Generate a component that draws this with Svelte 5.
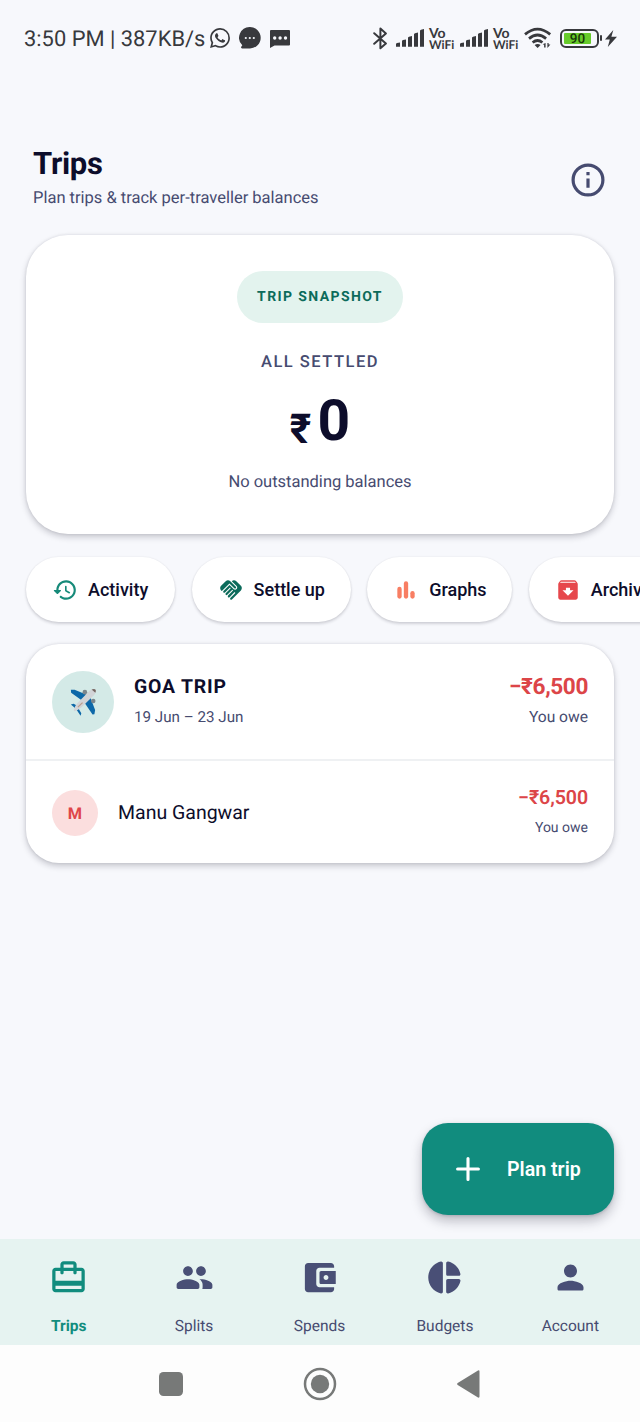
<script>
  const actions = [
    { label: 'Activity', icon: 'history', width: 149 },
    { label: 'Settle up', icon: 'handshake', width: 159 },
    { label: 'Graphs', icon: 'bars', width: 145 },
    { label: 'Archived', icon: 'archive', width: 162 }
  ];
  const tabs = [
    { label: 'Trips', icon: 'trips', active: true },
    { label: 'Splits', icon: 'people' },
    { label: 'Spends', icon: 'wallet' },
    { label: 'Budgets', icon: 'pie' },
    { label: 'Account', icon: 'person' }
  ];
</script>

{#snippet signal()}
  <svg class="signal" width="28" height="18" viewBox="0 0 28 18">
    <path d="M0 17.8v-3l1-.8 3-.6v4.400zM6 17.800v-6l1-.8 3-.6v7.400zM12 17.800V8.500l1-.8 3-.6v10.700zM18 17.800V5l1-.8 3-.6v14.200zM24 17.800V1.500l1-.8 3-.7v17.800z" />
  </svg>
{/snippet}

{#snippet carrier()}
  <span class="carrier"><span class="vo">Vo</span><span>WiFi</span></span>
{/snippet}

<div class="screen">
  <header class="status">
    <span class="clock">3:50 PM | 387KB/s</span>
    <svg class="wa" width="20" height="20" viewBox="0 0 24 24"><path d="M17.472 14.382c-.297-.149-1.758-.867-2.03-.967-.273-.099-.471-.148-.67.15-.197.297-.767.966-.94 1.164-.173.199-.347.223-.644.075-.297-.15-1.255-.463-2.39-1.475-.883-.788-1.48-1.761-1.653-2.059-.173-.297-.018-.458.13-.606.134-.133.298-.347.446-.52.149-.174.198-.298.298-.497.099-.198.05-.371-.025-.52-.075-.149-.669-1.612-.916-2.207-.242-.579-.487-.5-.669-.51-.173-.008-.371-.01-.57-.01-.198 0-.52.074-.792.372-.272.297-1.04 1.016-1.04 2.479 0 1.462 1.065 2.875 1.213 3.074.149.198 2.096 3.2 5.077 4.487.709.306 1.262.489 1.694.625.712.227 1.36.195 1.871.118.571-.085 1.758-.719 2.006-1.413.248-.694.248-1.289.173-1.413-.074-.124-.272-.198-.57-.347m-5.421 7.403h-.004a9.87 9.87 0 01-5.031-1.378l-.361-.214-3.741.982.998-3.648-.235-.374a9.86 9.86 0 01-1.51-5.26c.001-5.45 4.436-9.884 9.888-9.884 2.64 0 5.122 1.03 6.988 2.898a9.825 9.825 0 012.893 6.994c-.003 5.45-4.437 9.884-9.885 9.884m8.413-18.297A11.815 11.815 0 0012.05 0C5.495 0 .16 5.335.157 11.892c0 2.096.547 4.142 1.588 5.945L.057 24l6.305-1.654a11.882 11.882 0 005.683 1.448h.005c6.554 0 11.89-5.335 11.893-11.893a11.821 11.821 0 00-3.48-8.413z" /></svg>
    <svg class="bubble" width="22" height="22" viewBox="0 0 22 22"><path d="M11 0a10.7 10.7 0 1 1 0 21.4H3.2c-1.2 0-1.4-1-.8-1.8l.9-1.3A10.7 10.7 0 0 1 11 0z" /><g fill="#f7f8fc"><circle cx="6.8" cy="11" r="1.1" /><circle cx="10.8" cy="11" r="1.1" /><circle cx="14.8" cy="11" r="1.1" /></g></svg>
    <svg class="sms" width="20" height="18" viewBox="0 0 20 18"><path d="M1 0h18q1 0 1 1v13.4q0 1-1 1H4.5L0 18V1q0-1 1-1z" /><g fill="#f7f8fc"><circle cx="4.7" cy="8" r="1.7" /><circle cx="10.1" cy="8" r="1.7" /><circle cx="15.5" cy="8" r="1.7" /></g></svg>
    <svg class="bt" width="15" height="23" viewBox="0 0 15 23"><path d="M1.2 6.2l11.700 10.300-5.500 4.800V1.600l5.500 4.800L1.200 16.800" fill="none" stroke="#38393d" stroke-width="2" stroke-linejoin="round" stroke-linecap="round" /></svg>
    {@render signal()}
    {@render carrier()}
    {@render signal()}
    {@render carrier()}
    <svg class="wifi" width="28" height="22" viewBox="0 0 28 22"><g fill="none" stroke="#38393d" stroke-width="2.7"><path d="M1 7.4Q13.5-3.3 26.2 7.4M5 11.6q8.5-7.2 17.100 0M8.600 15.500q5-4 9.800 0" /></g><path d="M10.6 18.1q3-2.200 6 0l-3 2.900zM18.600 17.200l3-1.200v4.400h-1.500v-2.600zM26.400 17.600l-3 3.400v-5h1.200v1.600z" /></svg>
    <span class="battery"><span class="charge">90</span></span>
    <i class="nub"></i>
    <svg class="bolt" width="12" height="17" viewBox="0 0 12 17"><path d="M8.3 0L0 9.5h4.8L2.8 17 12 6.7H6.4z" /></svg>
  </header>

  <main>
    <section class="heading">
      <div>
        <h1>Trips</h1>
        <p>Plan trips &amp; track per-traveller balances</p>
      </div>
      <svg class="info" width="34" height="34" viewBox="0 0 34 34"><circle cx="17" cy="17" r="14.9" fill="none" stroke="#464b70" stroke-width="3.2" /><path d="M15.4 15.6h3.2v9.2h-3.2zM15.4 8.9h3.2v3.3h-3.2z" fill="#464b70" /></svg>
    </section>

    <section class="card summary">
      <span class="tag">TRIP SNAPSHOT</span>
      <span class="state">ALL SETTLED</span>
      <div class="total"><span class="cur">₹</span><span class="num">0</span></div>
      <span class="note">No outstanding balances</span>
    </section>

    <nav class="actions">
      {#each actions as a}
        <button class="pill" style:width="{a.width}px">
          <svg width="26" height="26" viewBox="0 0 24 24">
            {#if a.icon === 'history'}
              <path fill="#168a79" d="M13.26 3C8.17 2.86 4 6.95 4 12H2.21c-.45 0-.67.54-.35.85l2.79 2.8c.2.2.51.2.71 0l2.79-2.8c.31-.31.09-.85-.36-.85H6c0-3.9 3.18-7.05 7.1-7 3.72.05 6.85 3.18 6.9 6.9.05 3.91-3.1 7.1-7 7.1-1.61 0-3.1-.55-4.28-1.48-.4-.31-.96-.28-1.32.08-.42.42-.39 1.13.08 1.49C9 20.29 10.91 21 13 21c5.05 0 9.14-4.17 9-9.26-.13-4.69-4.05-8.61-8.74-8.74zm-.51 5c-.41 0-.75.34-.75.75v3.68c0 .35.19.68.49.86l3.12 1.85c.36.21.82.09 1.03-.26.21-.36.09-.82-.26-1.03l-2.88-1.71v-3.4c0-.4-.34-.74-.75-.74z" />
            {:else if a.icon === 'handshake'}
              <path fill="#0c6b5b" d="M16.48 10.41c-.39.39-1.04.39-1.43 0l-4.47-4.46-7.05 7.04-.66-.63c-1.17-1.17-1.17-3.07 0-4.24l4.24-4.24c1.17-1.17 3.07-1.17 4.24 0L16.48 9c.39.39.39 1.02 0 1.41zm.7-2.12c.78.78.78 2.05 0 2.83-1.27 1.27-2.61.22-2.83 0l-3.76-3.76-5.57 5.57c-.39.39-.39 1.02 0 1.41.39.39 1.02.39 1.42 0l4.62-4.62.71.71-4.62 4.62c-.39.39-.39 1.02 0 1.41.39.39 1.02.39 1.42 0l4.62-4.62.71.71-4.62 4.62c-.39.39-.39 1.02 0 1.41.39.39 1.02.39 1.41 0l4.62-4.62.71.71-4.62 4.62c-.39.39-.39 1.02 0 1.41.39.39 1.02.39 1.41 0l8.32-8.34c1.17-1.17 1.17-3.07 0-4.24l-4.24-4.24c-1.15-1.15-3.01-1.17-4.18-.06l3.74 3.77z" />
            {:else if a.icon === 'bars'}
              <g fill="#f87e63"><rect x="4" y="9" width="4" height="11" rx="2" /><rect x="10" y="4" width="4" height="16" rx="2" /><rect x="16" y="13" width="4" height="7" rx="2" /></g>
            {:else}
              <path fill="#e6474c" fill-rule="evenodd" d="M20.54 5.23l-1.39-1.68C18.88 3.21 18.47 3 18 3H6c-.47 0-.88.21-1.16.55L3.46 5.23C3.17 5.57 3 6.02 3 6.5V19c0 1.1.9 2 2 2h14c1.1 0 2-.9 2-2V6.5c0-.48-.17-.93-.46-1.27zM12 17.2l-5.1-4.9h3.2V10h3.8v2.3h3.2zM4.6 5.400l.8-1h13l.9 1z" />
            {/if}
          </svg>
          <span>{a.label}</span>
        </button>
      {/each}
    </nav>

    <section class="card trips">
      <div class="row trip">
        <span class="avatar plane">
          <svg width="28" height="28" viewBox="0 0 30 30">
            <path fill="#0d68a8" d="M2 2l4-.2 13 5.500-5.500 5.700L2.300 5zM23 10.500l5 13.200-.8 4.300-2 .3-8-11.800zM2 17.800l3-.8 5.200 2.800-2.500 2.700zM10.200 22l3 5-.8 2.800-4.700-7z" />
            <circle cx="17" cy="4.500" r="2.500" fill="#7b858b" /><circle cx="26" cy="14" r="2.400" fill="#7b858b" />
            <path fill="#d2d4d7" d="M22.3 2.7q4-2.300 5.800-1.400 1.500 1.900-.9 6L13.400 20.600q-4 3.400-7.400 4.200-1-.2-.8-1.200 1-4.600 3.700-7.200z" />
            <path fill="#73645f" d="M24.2 1.700q2.800-1.200 4-.2 1.200 1 .1 3.500z" /><path d="M9.500 20.500l5-4.800" stroke="#bc9c8c" stroke-width="1.400" />
          </svg>
        </span>
        <div class="who"><strong>GOA TRIP</strong><span>19 Jun – 23 Jun</span></div>
        <div class="owed"><strong>−₹6,500</strong><span>You owe</span></div>
      </div>
      <div class="row person">
        <span class="avatar initial">M</span>
        <span class="name">Manu Gangwar</span>
        <div class="owed small"><strong>−₹6,500</strong><span>You owe</span></div>
      </div>
    </section>

    <button class="fab">
      <svg width="24" height="24" viewBox="0 0 24 24"><path d="M12 1.6v20.800M1.600 12h20.800" stroke="#fff" stroke-width="3.100" stroke-linecap="round" /></svg>
      <span>Plan trip</span>
    </button>
  </main>

  <nav class="tabs">
    {#each tabs as t}
      <div class="tab" class:active={t.active}>
        <svg width="39" height="39" viewBox="0 0 24 24">
          {#if t.icon === 'trips'}
            <path fill-rule="evenodd" d="M17 6V4c0-1.100-.9-2-2-2H9c-1.100 0-2 .9-2 2v2H4c-1.100 0-2 .9-2 2v11c0 1.100.9 2 2 2h16c1.100 0 2-.9 2-2V8c0-1.100-.9-2-2-2zM9 4h6v2H9zm11 15H4v-2h16zm0-5H4V8h3v1c0 .55.45 1 1 1s1-.45 1-1V8h6v1c0 .55.45 1 1 1s1-.45 1-1V8h3z" />
          {:else if t.icon === 'people'}
            <path d="M16 11c1.660 0 2.990-1.340 2.990-3S17.660 5 16 5s-3 1.340-3 3 1.340 3 3 3zm-8 0c1.660 0 2.990-1.340 2.990-3S9.660 5 8 5 5 6.340 5 8s1.340 3 3 3zm0 2c-2.330 0-7 1.170-7 3.500V18c0 .55.45 1 1 1h12c.55 0 1-.45 1-1v-1.500c0-2.330-4.670-3.500-7-3.500zm8 0c-.29 0-.62.02-.97.05.02.01.03.03.04.04 1.140.83 1.930 1.940 1.930 3.410V18c0 .35-.07.69-.18 1H22c.55 0 1-.45 1-1v-1.500c0-2.330-4.670-3.500-7-3.500z" />
          {:else if t.icon === 'wallet'}
            <path d="M10 16V8c0-1.100.89-2 2-2h9V5c0-1.100-.9-2-2-2H5c-1.110 0-2 .9-2 2v14c0 1.100.89 2 2 2h14c1.100 0 2-.9 2-2v-1h-9c-1.110 0-2-.9-2-2zm3-8c-.55 0-1 .45-1 1v6c0 .55.45 1 1 1h9V8zm3 5.500c-.83 0-1.500-.67-1.500-1.500s.67-1.500 1.500-1.500 1.500.67 1.500 1.500-.67 1.500-1.500 1.500z" />
          {:else if t.icon === 'pie'}
            <path d="M11 3.180v17.640c0 .64-.59 1.120-1.210.98C5.320 20.800 2 16.790 2 12s3.320-8.800 7.790-9.800c.62-.14 1.210.34 1.210.98zm2.030 0v6.810c0 .55.45 1 1 1h6.790c.64 0 1.120-.59.98-1.220-.85-3.760-3.800-6.720-7.550-7.570-.63-.14-1.220.34-1.220.98zm0 10.830v6.810c0 .64.59 1.120 1.220.98 3.760-.85 6.710-3.820 7.560-7.580.14-.62-.35-1.220-.98-1.220h-6.790c-.56.01-1.010.46-1.010 1.010z" />
          {:else}
            <path d="M12 12c2.210 0 4-1.790 4-4s-1.790-4-4-4-4 1.790-4 4 1.790 4 4 4zm0 2c-2.670 0-8 1.340-8 4v1c0 .55.45 1 1 1h14c.55 0 1-.45 1-1v-1c0-2.660-5.330-4-8-4z" />
          {/if}
        </svg>
        <span>{t.label}</span>
      </div>
    {/each}
  </nav>

  <footer class="system">
    <svg width="24" height="24" viewBox="0 0 24 24"><rect width="24" height="24" rx="4.500" /></svg>
    <svg width="34" height="34" viewBox="0 0 34 34"><circle cx="17" cy="17" r="15" fill="none" stroke="#777978" stroke-width="2.500" /><circle cx="17" cy="17" r="9.200" /></svg>
    <svg width="23" height="28" viewBox="0 0 23 28"><path d="M.7 13L21 .5q1.500-.6 1.500 1v25q0 1.600-1.500 1L.7 15q-1.200-1 0-2z" /></svg>
  </footer>
</div>

<style>
  :global(body) { margin: 0; background: #f7f8fc; }
  .screen { width: 640px; height: 1422px; overflow: hidden; display: flex; flex-direction: column; background: #f7f8fc; color: #0d0d2b; font-family: Roboto, sans-serif; white-space: nowrap; text-rendering: geometricPrecision; }
  svg { display: block; flex: none; }
  h1, p { margin: 0; }
  button { border: 0; margin: 0; font: inherit; color: inherit; text-align: left; }

  .status { height: 76px; flex: none; box-sizing: border-box; padding-left: 24px; display: flex; align-items: center; fill: #38393d; color: #38393d; }
  .clock { width: 186px; flex: none; font-size: 21.900px; line-height: 26px; padding-top: 4px; }
  .bubble { margin-left: 9px; }
  .sms { margin: 2px 83px 0 9px; }
  .bt { margin-right: 8px; }
  .signal { margin-right: 5px; }
  .carrier { width: 31px; font: 700 12px/12px Lato, sans-serif; padding-top: 1px; }
  .carrier span { display: block; }
  .carrier .vo { font-size: 14px; }
  .wifi { margin-right: 8px; }
  .battery { width: 39px; height: 19px; box-sizing: border-box; border: 2px solid #38393d; border-radius: 6px; padding: 2px; }
  .charge { display: block; height: 11px; width: 27px; background: #67cb2b; border-radius: 1px; color: #173808; font-size: 13.500px; font-weight: 500; line-height: 12px; text-align: center; }
  .nub { width: 2px; height: 6px; margin-left: 1px; background: #38393d; border-radius: 1px; }
  .bolt { margin-left: 3px; }

  main { flex: none; height: 1163px; padding: 0 26px; box-sizing: border-box; display: flex; flex-direction: column; }
  .heading { height: 159px; box-sizing: border-box; padding: 70px 9px 0 7px; display: flex; justify-content: space-between; }
  h1 { font-size: 31px; font-weight: 700; line-height: 36px; letter-spacing: -.3px; }
  .heading p { font-size: 16.500px; line-height: 20px; margin-top: 7px; color: #464b70; }
  .info { margin-top: 17px; }

  .card { background: #fff; box-shadow: 0 3px 6px rgba(20, 20, 40, .21), 0 0 3px rgba(20, 20, 40, .1); flex: none; }
  .summary { height: 299px; border-radius: 42px; box-sizing: border-box; padding-top: 36px; display: flex; flex-direction: column; align-items: center; }
  .tag { width: 166px; height: 52px; border-radius: 26px; background: #e3f3ee; color: #0c6b5b; font-size: 14px; font-weight: 700; letter-spacing: 1.400px; line-height: 52px; text-align: center; }
  .state { margin-top: 29px; font-size: 16.500px; line-height: 22px; font-weight: 500; letter-spacing: 1.500px; color: #464b70; }
  .total { display: flex; align-items: baseline; gap: 6px; height: 70px; margin-top: 12px; font-weight: 700; line-height: 70px; }
  .cur { font-size: 41px; position: relative; top: 3px; }
  .num { font-size: 57px; }
  .note { margin-top: 16px; font-size: 16.500px; line-height: 22px; color: #464b70; }

  .actions { display: flex; gap: 16.600px; margin-top: 23px; flex: none; }
  .pill { flex: none; height: 65px; box-sizing: border-box; border-radius: 33px; padding: 0 0 0 26px; background: #fff; display: flex; align-items: center; gap: 10px; font-size: 18px; font-weight: 500; box-shadow: 0 2px 3px rgba(20, 20, 40, .16), 0 0 2px rgba(20, 20, 40, .08); }

  .trips { margin-top: 22px; height: 219px; border-radius: 33px; }
  .row { display: flex; align-items: center; padding: 0 26px; box-sizing: border-box; }
  .trip { height: 117px; border-bottom: 2px solid #eff1f3; }
  .person { height: 102px; padding-top: 2px; }
  .avatar { display: grid; place-items: center; border-radius: 50%; flex: none; }
  .plane { width: 62px; height: 62px; background: #d4eae7; margin-right: 20px; }
  .initial { width: 46px; height: 46px; background: #fbdede; color: #df4549; font-size: 16.300px; font-weight: 700; margin-right: 20px; }
  .who strong, .who span, .owed strong, .owed span { display: block; }
  .who strong { font-size: 19.400px; line-height: 26px; font-weight: 700; letter-spacing: .8px; }
  .who span { font-size: 15.200px; line-height: 20px; margin: 7px 0 2px; color: #464b70; }
  .owed { margin-left: auto; text-align: right; }
  .owed strong { color: #dc4548; font-size: 22.600px; line-height: 27px; font-weight: 700; letter-spacing: -.4px; margin-top: -1px; }
  .owed span { font-size: 15.600px; line-height: 20px; margin: 7px 0 2px; color: #464b70; }
  .owed.small strong { font-size: 19.600px; line-height: 24px; font-weight: 600; letter-spacing: -.1px; margin-top: 0; }
  .owed.small span { font-size: 14px; margin: 8px 0 3px; }
  .name { font-size: 19.500px; padding-bottom: 1px; }

  .fab { margin: auto 0 24px auto; width: 192px; height: 92px; flex: none; border-radius: 26px; background: #118c7e; color: #fff; padding: 0 0 0 34px; display: flex; align-items: center; gap: 27px; font-size: 19.600px; font-weight: 600; box-shadow: 0 6px 12px rgba(20, 20, 40, .26), 0 1px 3px rgba(20, 20, 40, .15); }

  .tabs { flex: none; height: 106px; box-sizing: border-box; padding: 19px 7px 0 6px; background: #e6f3f1; display: flex; }
  .tab { flex: 1; display: flex; flex-direction: column; align-items: center; gap: 19px; font-size: 15.500px; line-height: 20px; fill: #494f76; color: #464b70; }
  .active { fill: #118c7e; color: #118c7e; font-weight: 700; }

  .system { flex: 1; background: #fdfdfd; fill: #777978; display: flex; align-items: center; justify-content: center; gap: 120px; padding: 0 2px 0 0; }
</style>
